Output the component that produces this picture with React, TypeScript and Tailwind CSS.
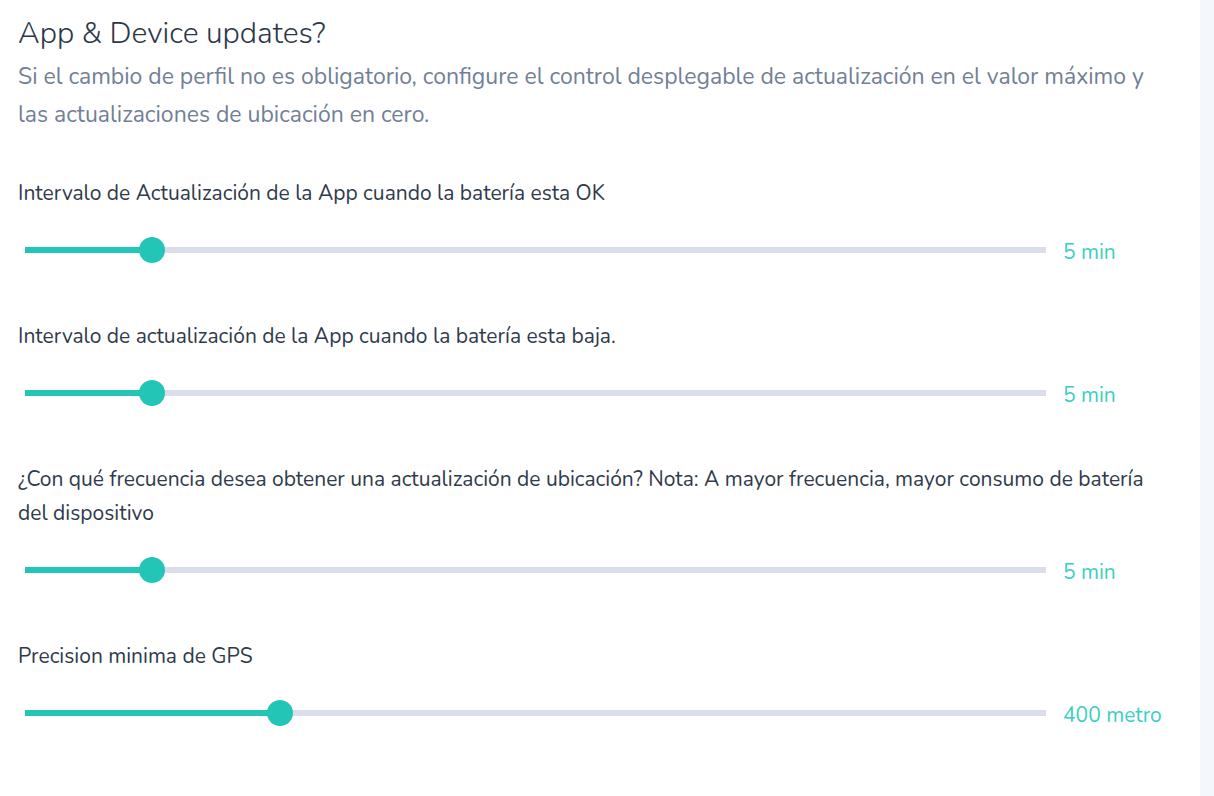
import React from 'react';

const SLIDERS = [
  { label: 'Intervalo de Actualización de la App cuando la batería esta OK', value: '5 min', pct: 12.4 },
  { label: 'Intervalo de actualización de la App cuando la batería esta baja.', value: '5 min', pct: 12.4 },
  {
    label:
      '¿Con qué frecuencia desea obtener una actualización de ubicación? Nota: A mayor frecuencia, mayor consumo de batería del dispositivo',
    value: '5 min',
    pct: 12.4,
  },
  { label: 'Precision minima de GPS', value: '400 metro', pct: 25 },
];

const Slider: React.FC<{ pct: number; value: string }> = ({ pct, value }) => (
  <div className="flex items-center h-[26px]">
    <div className="relative flex-1 ml-[7px] h-[6px] bg-[#dadeea]">
      <div className="absolute left-0 top-0 h-full bg-[#22c5b6]" style={{ width: `${pct}%` }} />
      <div
        className="absolute top-1/2 w-[26px] h-[26px] -translate-x-1/2 -translate-y-1/2 rounded-full bg-[#22c5b6]"
        style={{ left: `${pct}%` }}
      />
    </div>
    <div className="w-[118px] pl-[17px] pt-[4px] text-[21px] leading-[26px] text-[#3ccfc1]">{value}</div>
  </div>
);

const App: React.FC = () => {
  return (
    <div className="flex min-h-[796px] bg-white font-['Nunito','Lato',sans-serif]">
      <div className="w-[1200px] pl-[18px] pr-[36px] pt-[16px]">
        <h2 className="text-[30px] leading-[36px] font-light text-[#2d3748]">App &amp; Device updates?</h2>
        <p className="mt-[6px] text-[23px] leading-[38px] text-[#718096]">
          Si el cambio de perfil no es obligatorio, configure el control desplegable de actualización en el valor máximo y
          las actualizaciones de ubicación en cero.
        </p>

        <div className="mt-[42px] flex flex-col gap-[56px]">
          {SLIDERS.map((s) => (
            <div key={s.label}>
              <p className="text-[21px] leading-[34px] text-[#2f3a4c]">{s.label}</p>
              <div className="mt-[27px]">
                <Slider pct={s.pct} value={s.value} />
              </div>
            </div>
          ))}
        </div>
      </div>
      <div className="flex-1 bg-[#f4f7fb]" />
    </div>
  );
};

export default App;
